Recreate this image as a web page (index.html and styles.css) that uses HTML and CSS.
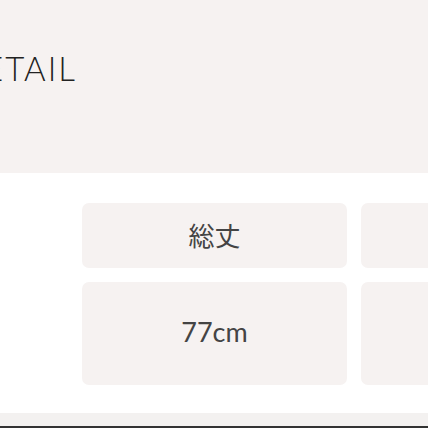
FILE: index.html
```html
<!DOCTYPE html>
<html>
<head>
<meta charset="utf-8">
<link rel="stylesheet" href="styles.css">
</head>
<body>
<div class="page">
  <header class="hero">
    <h1 class="title">DETAIL</h1>
  </header>
  <section class="specs">
    <div class="grid">
      <div class="cell head">総丈</div>
      <div class="cell head"></div>
      <div class="cell val">77cm</div>
      <div class="cell val"></div>
    </div>
  </section>
  <footer class="foot"></footer>
</div>
</body>
</html>
```
FILE: styles.css
```css
html, body {
  margin: 0;
  padding: 0;
  background: #ffffff;
  overflow: hidden;
}
.page {
  width: 428px;
  height: 428px;
  display: flex;
  flex-direction: column;
  overflow: hidden;
}
.hero {
  height: 173px;
  flex: none;
  background: #f6f2f1;
  display: flex;
  align-items: flex-start;
}
.title {
  margin: 50px 0 0 -43px;
  font-family: "Lato", sans-serif;
  font-weight: 300;
  font-size: 33px;
  letter-spacing: 2px;
  color: #222;
  line-height: 36px;
}
.specs {
  flex: none;
  height: 240px;
  padding: 30px 0 0 82px;
  box-sizing: border-box;
}
.grid {
  display: grid;
  grid-template-columns: 265px 265px;
  grid-template-rows: 65px 103px;
  gap: 14px;
}
.cell {
  background: #f6f2f1;
  border-radius: 7px;
  display: flex;
  justify-content: center;
  align-items: center;
  color: #444;
  font-family: "Lato", "Noto Sans CJK JP", sans-serif;
}
.head {
  font-size: 26px;
  padding-bottom: 3px;
}
.val {
  font-size: 27px;
  padding-bottom: 4px;
}
.foot {
  flex: none;
  height: 13px;
  background: #f3f1f0;
  border-bottom: 2px solid #333;
}
```
